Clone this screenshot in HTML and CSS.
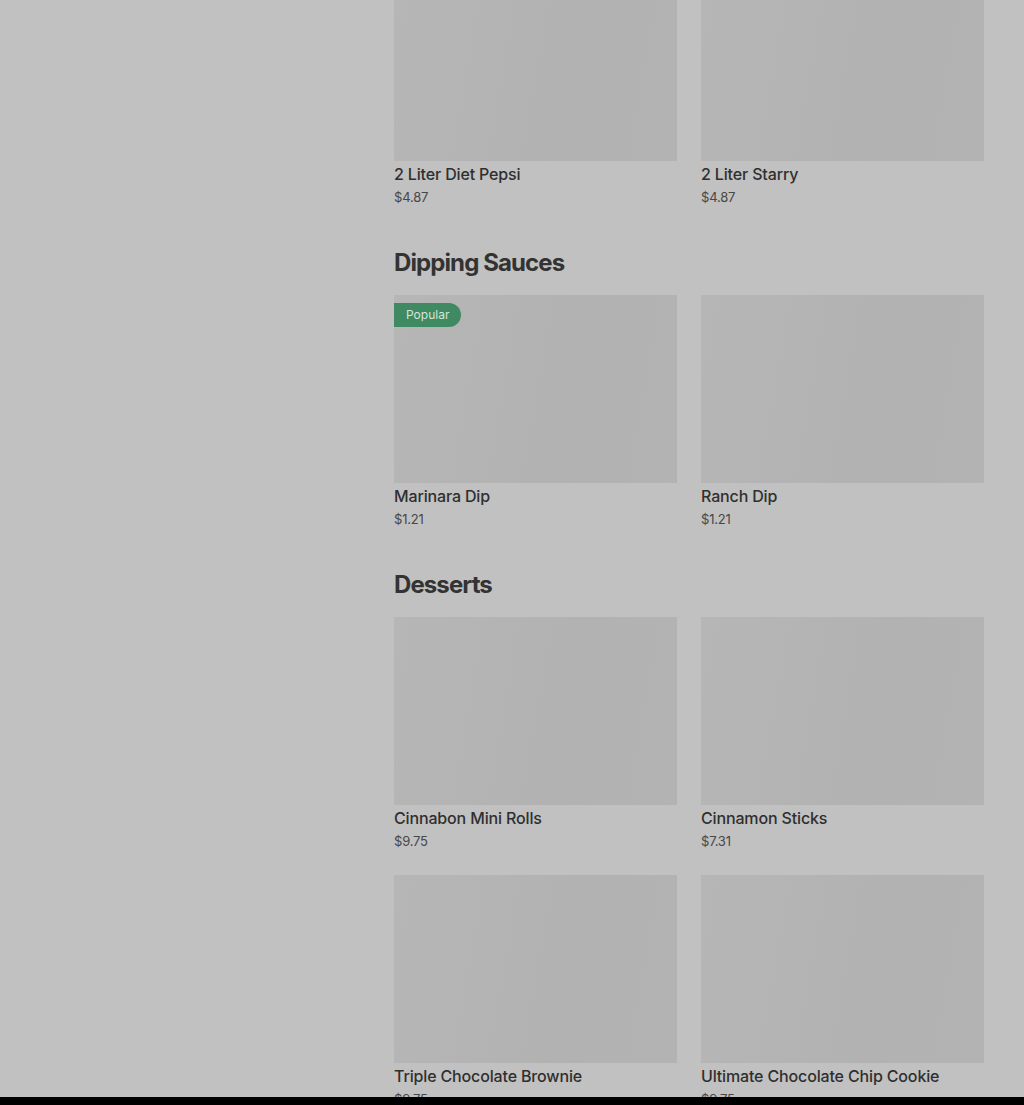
FILE: index.html
```html
<!DOCTYPE html>
<html lang="en">
<head>
    <meta charset="UTF-8">
    <meta name="viewport" content="width=device-width, initial-scale=1.0">
    <title>Menu</title>
    <link rel="stylesheet" href="styles.css">
</head>
<body>
    <div class="page">
        <aside class="sidebar"></aside>

        <main class="menu">
            <!-- Drinks (scrolled past the heading) -->
            <section class="menu-section first">
                <div class="item-grid">
                    <div class="item">
                        <div class="item-image"></div>
                        <div class="item-name">2 Liter Diet Pepsi</div>
                        <div class="item-price">$4.87</div>
                    </div>
                    <div class="item">
                        <div class="item-image"></div>
                        <div class="item-name">2 Liter Starry</div>
                        <div class="item-price">$4.87</div>
                    </div>
                </div>
            </section>

            <section class="menu-section">
                <h2 class="section-title">Dipping Sauces</h2>
                <div class="item-grid">
                    <div class="item">
                        <div class="item-image">
                            <span class="badge">Popular</span>
                        </div>
                        <div class="item-name">Marinara Dip</div>
                        <div class="item-price">$1.21</div>
                    </div>
                    <div class="item">
                        <div class="item-image"></div>
                        <div class="item-name">Ranch Dip</div>
                        <div class="item-price">$1.21</div>
                    </div>
                </div>
            </section>

            <section class="menu-section">
                <h2 class="section-title">Desserts</h2>
                <div class="item-grid">
                    <div class="item">
                        <div class="item-image"></div>
                        <div class="item-name">Cinnabon Mini Rolls</div>
                        <div class="item-price">$9.75</div>
                    </div>
                    <div class="item">
                        <div class="item-image"></div>
                        <div class="item-name">Cinnamon Sticks</div>
                        <div class="item-price">$7.31</div>
                    </div>
                    <div class="item">
                        <div class="item-image"></div>
                        <div class="item-name">Triple Chocolate Brownie</div>
                        <div class="item-price">$9.75</div>
                    </div>
                    <div class="item">
                        <div class="item-image"></div>
                        <div class="item-name">Ultimate Chocolate Chip Cookie</div>
                        <div class="item-price">$9.75</div>
                    </div>
                </div>
            </section>
        </main>
    </div>

    <div class="bottom-bar"></div>
</body>
</html>
```

FILE: styles.css
```css
/* Global */
body {
    margin: 0;
    padding: 0;
    font-family: Inter, "Noto Sans", sans-serif;
    background-color: #c1c1c1;
    color: #2f2f2f;
    overflow: hidden;
}

.page {
    display: flex;
    padding-right: 40px;
}

.sidebar {
    width: 394px;
    flex-shrink: 0;
}

.menu {
    flex: 1;
}

/* Sections */
.menu-section {
    padding-top: 42px;
}

.menu-section.first {
    padding-top: 0;
    margin-top: -27px;
}

.section-title {
    margin: 0 0 16px;
    font-size: 24px;
    line-height: 32px;
    font-weight: 700;
    letter-spacing: -0.9px;
    color: #333;
}

.item-grid {
    display: grid;
    grid-template-columns: 1fr 1fr;
    column-gap: 24px;
    row-gap: 26px;
}

/* Items */
.item {
    height: 232px;
}

.item-image {
    position: relative;
    height: 188px;
    background: linear-gradient(100deg, #b6b6b6, #b2b2b2 60%, #b3b3b3);
}

.item-name {
    margin-top: 3px;
    font-size: 16px;
    line-height: 20px;
    font-weight: 500;
    letter-spacing: -0.15px;
    color: #2f2f2f;
    white-space: nowrap;
}

.item-price {
    margin-top: 5px;
    font-size: 13px;
    line-height: 16px;
    color: #474747;
    letter-spacing: -0.2px;
}

.badge {
    position: absolute;
    top: 8px;
    left: 0;
    height: 24px;
    line-height: 24px;
    padding: 0 12px;
    font-size: 12px;
    color: #d4e6da;
    background: #3f8a63;
    border-radius: 0 12px 12px 0;
}

.bottom-bar {
    position: fixed;
    left: 0;
    right: 0;
    bottom: 0;
    height: 8px;
    background: #000;
}
```
